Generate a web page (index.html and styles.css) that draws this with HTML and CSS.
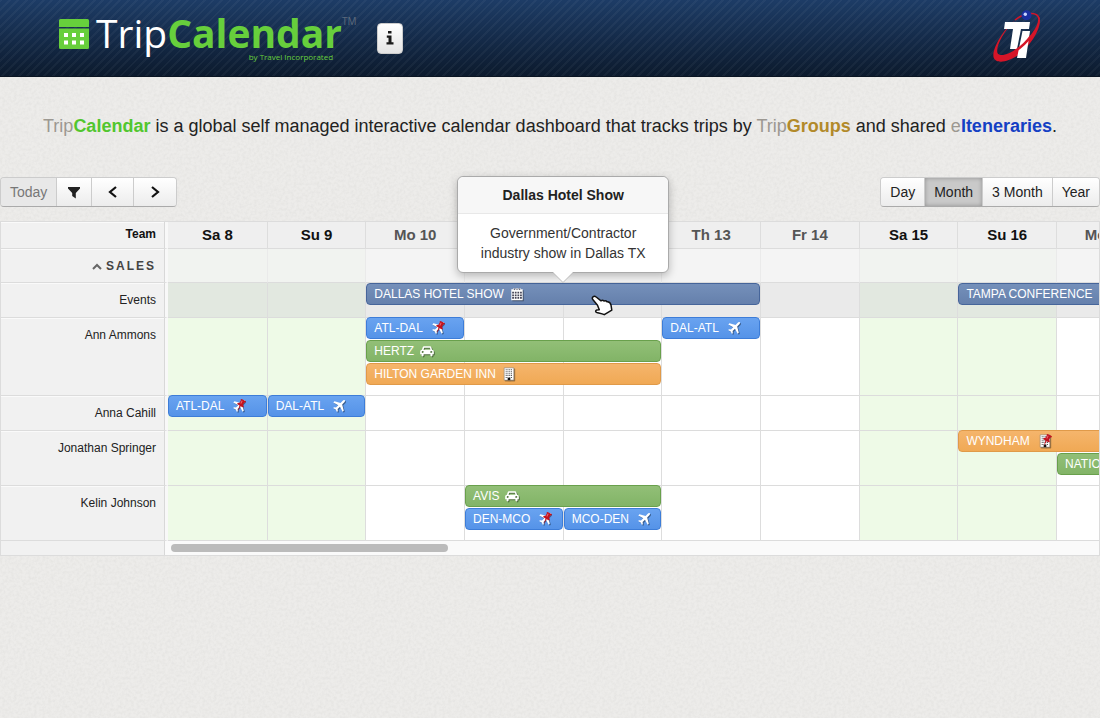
FILE: index.html
```html
<!DOCTYPE html>
<html lang="en">
<head>
    <meta charset="UTF-8">
    <meta name="viewport" content="width=device-width, initial-scale=1.0">
    <title>TripCalendar</title>
    <link rel="stylesheet" href="styles.css">
</head>
<body>
<svg class="sprite" aria-hidden="true">
    <symbol id="plane" viewBox="0 0 16 16">
        <path d="M14.6 1.4c.6.6.1 1.800-.8 2.700L11.600 6.300l1.900 7-1.300 1.300-3.100-5.700-2.700 2.600.3 2.300-1 1-1.500-2.900L1.300 10.400l1-1 2.300.3 2.600-2.700L1.500 3.900 2.800 2.600l7 1.900L12 2.200c.8-.9 2-1.400 2.600-.8z"/>
    </symbol>
    <symbol id="car" viewBox="0 0 16 16">
        <path fill-rule="evenodd" d="M4.600 2.500h6.800c.8 0 1.300.4 1.500 1.100l.9 2.900c1.200.2 2 1 2 2.100v3.200h-1.500v1.100c0 .8-.5 1.300-1.200 1.300s-1.200-.5-1.200-1.300v-1.100H4.100v1.100c0 .8-.5 1.300-1.200 1.300s-1.200-.5-1.200-1.300v-1.100H.2V8.600c0-1.100.8-1.900 2-2.100l.9-2.900c.2-.7.7-1.100 1.500-1.100zm.1 1.700L4 6.500h8l-.7-2.300zM3.100 8a1.200 1.200 0 1 0 0 2.400 1.200 1.200 0 0 0 0-2.400zm9.800 0a1.200 1.200 0 1 0 0 2.400 1.200 1.200 0 0 0 0-2.400z"/>
    </symbol>
    <symbol id="hotel" viewBox="0 0 16 16">
        <path fill="#fff" stroke="#777" stroke-width=".6" d="M2.500 1h11v14h-11z"/>
        <path stroke="#555" stroke-width="1.200" stroke-dasharray="1.200 .8" d="M4.200 3.200h8M4.200 5.400h8M4.200 7.600h8M4.200 9.800h8M4.200 12h8"/>
        <path fill="#111" d="M6.500 12.500h3V15h-3z"/>
    </symbol>
    <symbol id="pin" viewBox="0 0 10 12">
        <path fill="#c1121f" d="M5.600 0 10 2.300l-.7 1.300-.9-.2-1.300 2.400.7 1.600-.7 1.200L4.600 7.200 2.200 11.600l-.3-.1L3.500 6.500 1 5.100l.8-1.200 1.700-.1 1.300-2.400-.2-.9z"/>
        <path fill="#ef6a72" d="M5.800 1.500 6.600 2 5.200 4.700l-.8-.5z"/>
    </symbol>
    <symbol id="events" viewBox="0 0 16 16">
        <path fill="#fff" d="M1.500 2.500H4V1h2v1.500h1V1h2v1.500h1V1h2v1.500h2.500V15h-13z"/>
        <path stroke="#445" stroke-width="2" stroke-dasharray="2 1" d="M2.500 6.500h11M2.500 9.500h11M2.500 12.500h11"/>
        <path stroke="#445" d="M5 1.500v2M8 1.500v2M11 1.500v2"/>
    </symbol>
</svg>

<header class="header">
    <a class="logo" href="#">
        <svg class="logo-icon" viewBox="0 0 30 30" aria-hidden="true">
            <path fill="#67cf3c" d="M1.500 0h27A1.500 1.500 0 0 1 30 1.500V8H0V1.500A1.500 1.500 0 0 1 1.500 0zM0 9.500h30v19a1.500 1.500 0 0 1-1.500 1.500h-27A1.500 1.500 0 0 1 0 28.500z"/>
            <path fill="#fff" d="M5 14h4v4H5zM13 14h4v4h-4zM21 14h4v4h-4zM5 21.500h4v4H5zM13 21.500h4v4h-4zM21 21.500h4v4h-4z"/>
        </svg>
        <span class="logo-text">
            <span class="logo-name">Trip<b>Calendar</b></span>
            <small>by Travel Incorporated</small>
        </span>
        <span class="tm">TM</span>
    </a>
    <button class="info" type="button" aria-label="Information">
        <svg viewBox="0 0 8 14" aria-hidden="true"><path fill="#1a1a1a" d="M2 0h3.500v2.500H2zM.8 4.500h4.700v6.800H7.500V13.500H.5v-2.200h2V6.700H.8z"/></svg>
    </button>
    <a class="company" href="#" aria-label="Travel Incorporated">
        <svg viewBox="0 0 50 52" aria-hidden="true">
            <path fill="none" stroke="#d51528" stroke-width="1.600" d="M22 10C32 2 45 1 46 9"/>
            <path fill="#d51528" d="M46.500 7c3 9-8 28-21 38C14 53 2 54 .5 47-.8 39 9 21 22 10 10 22 2.500 37 4.500 43c2 4 11 2 20-5 12-9 22-23 20.500-30z"/>
            <path fill="#fff" d="M12 12h25l-1 7h-8l-4 20h-7l3-20H11zM29.500 21h7.500l-4 27h-9z"/>
            <path fill="none" stroke="#d51528" stroke-width="2.500" d="M22 41c5-3 11-8 16-15"/>
            <circle cx="33.500" cy="5.200" r="5" fill="#1a2fa0"/>
            <circle cx="32.300" cy="4.200" r="1.700" fill="#c9d5ff"/>
        </svg>
    </a>
</header>

<p class="intro"><span class="muted">Trip</span><b class="green">Calendar</b> is a global self managed interactive calendar dashboard that tracks trips by <span class="muted">Trip</span><b class="gold">Groups</b> and shared <span class="muted">e</span><b class="blue">Iteneraries</b>.</p>

<div class="toolbar">
    <div class="btn-group">
        <button type="button" disabled>Today</button>
        <button type="button" aria-label="Filter"><svg viewBox="0 0 16 16" aria-hidden="true"><path fill="#222" d="M2 3h12v1.500L9.800 9v5.500L6.200 12V9L2 4.500z"/></svg></button>
        <button class="nav" type="button" aria-label="Previous"><svg viewBox="0 0 16 16" aria-hidden="true"><path fill="none" stroke="#111" stroke-width="2.200" d="M11 3 5 8l6 5"/></svg></button>
        <button class="nav" type="button" aria-label="Next"><svg viewBox="0 0 16 16" aria-hidden="true"><path fill="none" stroke="#111" stroke-width="2.200" d="m5 3 6 5-6 5"/></svg></button>
    </div>
    <div class="btn-group">
        <button type="button">Day</button>
        <button class="active" type="button">Month</button>
        <button type="button">3 Month</button>
        <button type="button">Year</button>
    </div>
</div>

<main class="calendar">
    <table>
        <thead>
            <tr>
                <th class="name" scope="col">Team</th>
                <th class="weekend" scope="col">Sa 8</th>
                <th class="weekend" scope="col">Su 9</th>
                <th scope="col">Mo 10</th>
                <th scope="col"></th>
                <th scope="col"></th>
                <th scope="col">Th 13</th>
                <th scope="col">Fr 14</th>
                <th class="weekend" scope="col">Sa 15</th>
                <th class="weekend" scope="col">Su 16</th>
                <th scope="col">Mo 17</th>
            </tr>
        </thead>
        <tbody>
            <tr class="group">
                <th class="name" scope="row"><svg class="caret" viewBox="0 0 10 7" aria-hidden="true"><path fill="none" stroke="#666" stroke-width="2" d="m1 6 4-4 4 4"/></svg>SALES</th>
                <td class="weekend"></td><td class="weekend"></td><td></td><td></td><td></td><td></td><td></td><td class="weekend"></td><td class="weekend"></td><td></td>
            </tr>
            <tr class="shared">
                <th class="name" scope="row">Events</th>
                <td class="weekend"></td>
                <td class="weekend"></td>
                <td>
                    <div class="event show days-4">DALLAS HOTEL SHOW <svg class="icon near"><use href="#events"/></svg>
                        <div class="popover" role="tooltip">
                            <h3>Dallas Hotel Show</h3>
                            <p>Government/Contractor industry show in Dallas TX</p>
                        </div>
                        <svg class="pointer" viewBox="0 0 22 21" aria-hidden="true"><path fill="#fff" stroke="#111" stroke-width="1.500" stroke-linejoin="round" d="M1.500 2.500C2.500.8 4 1 5.200 2L10 5.800c1-.8 2.200-.6 3 .2 1.200-.6 2.300-.2 3 .8 2-.2 3.500 1.200 4 3.200l.8 5.200-7.500 4.500c-2-1.200-4.500-1.500-7.500-2.200-1.500-.4-1.600-2.200 0-2.500l2.500-.2-1.800-4.600L2 4.800c-.8-.8-.9-1.500-.5-2.300z"/></svg>
                    </div>
                </td>
                <td></td><td></td><td></td><td></td>
                <td class="weekend"></td>
                <td class="weekend"><div class="event show days-2">TAMPA CONFERENCE</div></td>
                <td></td>
            </tr>
            <tr class="lanes-3">
                <th class="name" scope="row">Ann Ammons</th>
                <td class="weekend"></td>
                <td class="weekend"></td>
                <td>
                    <div class="event flight">ATL-DAL <svg class="icon"><use href="#plane"/></svg><svg class="pin"><use href="#pin"/></svg></div>
                    <div class="event car days-3">HERTZ <svg class="icon near"><use href="#car"/></svg></div>
                    <div class="event hotel days-3">HILTON GARDEN INN <svg class="icon near"><use href="#hotel"/></svg></div>
                </td>
                <td></td>
                <td></td>
                <td><div class="event flight">DAL-ATL <svg class="icon"><use href="#plane"/></svg></div></td>
                <td></td>
                <td class="weekend"></td>
                <td class="weekend"></td>
                <td></td>
            </tr>
            <tr>
                <th class="name" scope="row">Anna Cahill</th>
                <td class="weekend"><div class="event flight">ATL-DAL <svg class="icon"><use href="#plane"/></svg><svg class="pin"><use href="#pin"/></svg></div></td>
                <td class="weekend"><div class="event flight">DAL-ATL <svg class="icon"><use href="#plane"/></svg></div></td>
                <td></td><td></td><td></td><td></td><td></td>
                <td class="weekend"></td>
                <td class="weekend"></td>
                <td></td>
            </tr>
            <tr class="lanes-2">
                <th class="name" scope="row">Jonathan Springer</th>
                <td class="weekend"></td>
                <td class="weekend"></td>
                <td></td><td></td><td></td><td></td><td></td>
                <td class="weekend"></td>
                <td class="weekend"><div class="event hotel days-2">WYNDHAM <svg class="icon"><use href="#hotel"/></svg><svg class="pin"><use href="#pin"/></svg></div></td>
                <td><div class="event car second">NATIONAL</div></td>
            </tr>
            <tr class="lanes-2">
                <th class="name" scope="row">Kelin Johnson</th>
                <td class="weekend"></td>
                <td class="weekend"></td>
                <td></td>
                <td>
                    <div class="event car days-2">AVIS <svg class="icon near"><use href="#car"/></svg></div>
                    <div class="event flight">DEN-MCO <svg class="icon"><use href="#plane"/></svg><svg class="pin"><use href="#pin"/></svg></div>
                </td>
                <td><div class="event flight second">MCO-DEN <svg class="icon"><use href="#plane"/></svg></div></td>
                <td></td><td></td>
                <td class="weekend"></td>
                <td class="weekend"></td>
                <td></td>
            </tr>
        </tbody>
    </table>
    <div class="scroll">
        <div class="scroll-name"></div>
        <div class="scroll-track"><div class="scroll-thumb"></div></div>
    </div>
</main>
</body>
</html>
```
FILE: styles.css
```css
* {
    box-sizing: border-box;
}
body {
    margin: 0;
    font-family: "Liberation Sans", Arial, sans-serif;
    font-size: 14px;
    color: #222;
    background-color: #edecea;
    background-image: url("data:image/svg+xml,%3Csvg xmlns='http://www.w3.org/2000/svg' width='200' height='200'%3E%3Cfilter id='n'%3E%3CfeTurbulence type='fractalNoise' baseFrequency='.35' numOctaves='2' stitchTiles='stitch'/%3E%3CfeColorMatrix values='0 0 0 0 .5 0 0 0 0 .5 0 0 0 0 .48 .5 0 0 0 -.17'/%3E%3C/filter%3E%3Crect width='200' height='200' filter='url(%23n)' opacity='.6'/%3E%3C/svg%3E");
    overflow-x: hidden;
}
.sprite {
    display: none;
}

/* header */
.header {
    display: flex;
    align-items: center;
    height: 77px;
    padding: 0 57px 0 59px;
    background: repeating-linear-gradient(135deg, rgba(255, 255, 255, 0.04) 0 2px, transparent 2px 6px), linear-gradient(#1d3c66, #0c1a2d);
    border-bottom: 1px solid #0a1422;
}
.logo {
    display: flex;
    align-items: flex-start;
    height: 58px;
    color: #fff;
    text-decoration: none;
    font-family: "Open Sans", "Noto Sans", sans-serif;
}
.logo-icon {
    width: 30px;
    height: 30px;
    margin: 10px 7px 0 0;
}
.logo-text {
    display: flex;
    flex-direction: column;
}
.logo-name {
    font-size: 39px;
    line-height: 48px;
}
.logo b {
    color: #67cf3c;
}
.logo small {
    margin-top: -5px;
    padding-right: 9px;
    font-size: 8px;
    line-height: 10px;
    text-align: right;
    color: #67cf3c;
}
.tm {
    margin: 6px 0 0 0;
    font-size: 10px;
    line-height: 12px;
    color: #5d6a7c;
}
.info {
    display: flex;
    align-items: center;
    justify-content: center;
    width: 26px;
    height: 31px;
    margin-left: 20px;
    padding: 0;
    border: 1px solid #ccc;
    border-radius: 4px;
    background: linear-gradient(#fff, #e4e4e4);
}
.info svg {
    width: 8px;
    height: 14px;
}
.company {
    margin: 0 0 4px auto;
}
.company svg {
    display: block;
    width: 50px;
    height: 52px;
}

.intro {
    margin: 37px 0 39px;
    font-size: 18px;
    line-height: 24px;
    text-align: center;
}
.muted {
    color: #9c9891;
}
.green {
    color: #51c62e;
}
.gold {
    color: #b28a2a;
}
.blue {
    color: #1440c4;
}

/* toolbar */
.toolbar {
    display: flex;
    justify-content: space-between;
    margin-bottom: 14px;
}
.btn-group {
    display: flex;
    border: 1px solid #ccc;
    border-bottom-color: #aaa;
    border-radius: 4px;
    overflow: hidden;
}
.btn-group button {
    display: flex;
    align-items: center;
    justify-content: center;
    height: 28px;
    padding: 0 9px;
    border: 0;
    border-right: 1px solid #ccc;
    background: linear-gradient(#fff, #ececec);
    font: inherit;
    line-height: 20px;
    color: #222;
}
.btn-group button:last-child {
    border-right: 0;
}
.btn-group button:disabled {
    background: #e8e8e8;
    color: #777;
}
.btn-group .active {
    background: #c9c9c9;
    box-shadow: inset 0 0 4px rgba(0, 0, 0, 0.3);
}
.btn-group .nav {
    width: 42px;
}
.btn-group svg {
    width: 16px;
    height: 16px;
}

/* calendar */
.calendar {
    border: 1px solid #dcdcdc;
    background: #f7f7f7;
    overflow-x: clip;
}
table {
    width: calc(167px + (100% - 167px) * 1.06);
    table-layout: fixed;
    border-spacing: 0;
}
th, td {
    height: 35px;
    padding: 0;
    border-left: 1px solid #ddd;
    border-bottom: 1px solid #dcdcdc;
    vertical-align: top;
}
thead th {
    height: 27px;
    background: #efefef;
    font-size: 15px;
    line-height: 26px;
    color: #555;
}
thead .weekend {
    color: #111;
}
td {
    background: #fff;
}
td.weekend {
    background: #eefae7;
}
.name {
    width: 167px;
    padding: 10px 9px 0 0;
    border-left: 0;
    border-right: 3px solid #f8f8f8;
    background: #f1f1f1;
    box-shadow: inset -1px 0 #d8d8d8, inset 0 1px #fafafa;
    font-size: 12px;
    font-weight: normal;
    line-height: 14px;
    text-align: right;
    color: #222;
}
.name + td, .name + th {
    border-left: 0;
}
thead .name {
    padding-top: 5px;
    font-size: 12px;
    font-weight: bold;
    line-height: 14px;
    color: #111;
}
.group th, .group td {
    height: 34px;
}
.group .name {
    font-weight: bold;
    letter-spacing: 2px;
    color: #444;
}
.caret {
    width: 10px;
    height: 7px;
    margin-right: 4px;
}
.group td {
    background: #f4f4f4;
    border-left-color: #eaeaea;
}
.group td.weekend {
    background: #f1f3f0;
}
.shared td {
    background: #eaeaea;
}
.shared td.weekend {
    background: #e2e8e0;
}
.lanes-2 th, .lanes-2 td {
    height: 55px;
}
.lanes-3 th, .lanes-3 td {
    height: 78px;
}

/* events, pulled up over the row line */
.event {
    position: relative;
    z-index: 1;
    display: flex;
    align-items: center;
    width: 100%;
    height: 22px;
    margin: -1px 0 2px;
    padding-left: 7px;
    border: 1px solid;
    border-radius: 4px;
    font-size: 12px;
    line-height: 20px;
    color: #fff;
    white-space: nowrap;
}
.days-2 {
    width: calc(200% + 1px);
}
.days-3 {
    width: calc(300% + 2px);
}
.days-4 {
    width: calc(400% + 3px);
    z-index: 2;
}
.second {
    margin-top: 22px;
}
.show {
    margin-top: 0;
    background: linear-gradient(#7590ba, #6580ac);
    border-color: #46659a;
}
.flight {
    background: linear-gradient(#69a3f0, #5593e8);
    border-color: #3d7dd8;
}
.car {
    background: linear-gradient(#92bf77, #82b467);
    border-color: #69a04c;
}
.hotel {
    background: linear-gradient(#f5b56c, #f0a955);
    border-color: #e09a49;
}
.icon {
    flex: none;
    width: 14px;
    height: 14px;
    margin-left: 8px;
    fill: #fff;
    filter: drop-shadow(1px 1px 0 rgba(0, 0, 0, 0.4));
}
.near {
    margin-left: 6px;
}
.pin {
    z-index: 1;
    flex: none;
    width: 10px;
    height: 12px;
    margin: 0 0 3px -10px;
}

.popover {
    position: absolute;
    bottom: 31px;
    left: 50%;
    width: 212px;
    transform: translateX(-50%);
    border: 1px solid #aaa;
    border-radius: 6px;
    background: #fff;
    box-shadow: 0 3px 8px rgba(0, 0, 0, 0.25);
    font-size: 14px;
    line-height: 20px;
    color: #333;
    text-align: center;
    white-space: normal;
}
.popover h3 {
    margin: 0;
    padding: 8px;
    border-bottom: 1px solid #e8e8e8;
    border-radius: 6px 6px 0 0;
    background: #f7f7f7;
    font-size: 14px;
    line-height: 20px;
    color: #222;
}
.popover p {
    margin: 0;
    padding: 9px 16px;
}
.popover::after {
    content: "";
    position: absolute;
    top: 100%;
    left: 50%;
    margin-left: -10px;
    border: 10px solid transparent;
    border-top-color: #fff;
    border-bottom: 0;
    filter: drop-shadow(0 1px 0 #bbb);
}
.pointer {
    position: absolute;
    top: 11px;
    left: 57%;
    width: 22px;
    height: 21px;
}

.scroll {
    display: flex;
    height: 14px;
}
.scroll-name {
    width: 164px;
    background: #f1f1f1;
    border-right: 1px solid #d8d8d8;
}
.scroll-track {
    flex: 1;
    padding: 3px 6px;
    background: #fafafa;
}
.scroll-thumb {
    width: 30%;
    height: 8px;
    border-radius: 4px;
    background: #bbb;
}
```
